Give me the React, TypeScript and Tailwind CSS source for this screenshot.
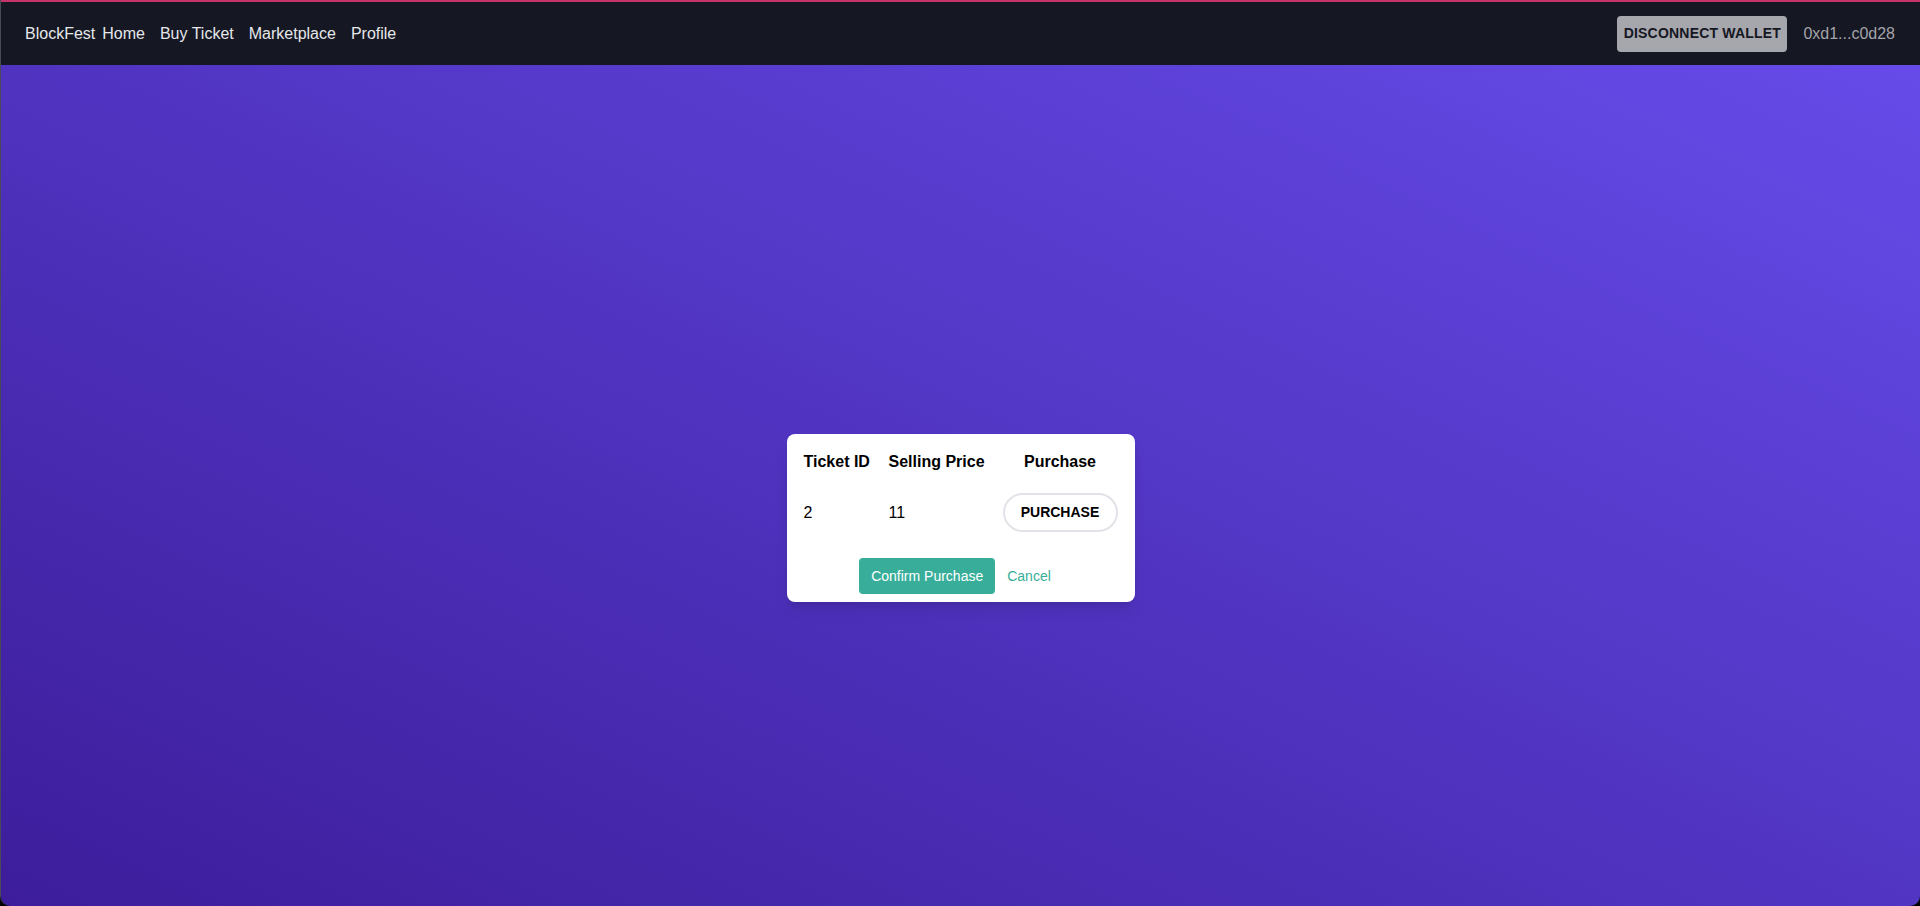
import React from 'react';

const font = { fontFamily: '"Liberation Sans", Arial, Helvetica, sans-serif' };

const links = ['Home', 'Buy Ticket', 'Marketplace', 'Profile'];

const Navbar: React.FC = () => (
  <nav className="flex h-[65px] items-center justify-between border-t-[2px] border-[#c4336a] bg-[#151722] pl-[24px] pr-[25px]">
    <div className="flex items-center text-[16px] text-[#e5e7eb]">
      <span className="mr-[7px]">BlockFest</span>
      <div className="flex gap-[15px]">
        {links.map((l) => (
          <a key={l} className="cursor-pointer">
            {l}
          </a>
        ))}
      </div>
    </div>
    <div className="flex items-center">
      <button className="h-[36px] w-[170px] rounded-[4px] bg-[#a6a6ad] text-[14px] font-bold tracking-[0.2px] text-[#151722]">
        DISCONNECT WALLET
      </button>
      <span className="ml-[16px] text-[16px] text-[#a3a3ab]">0xd1...c0d28</span>
    </div>
  </nav>
);

const PurchaseModal: React.FC = () => (
  <div className="w-[348px] rounded-[8px] bg-white pb-[8px] pl-[17px] pr-[16px] pt-[18px] text-black shadow-lg">
    <div className="flex h-[20px] items-center text-[16px] font-bold">
      <div className="w-[85px]">Ticket ID</div>
      <div className="w-[114px]">Selling Price</div>
      <div className="w-[115px] text-center">Purchase</div>
    </div>
    <div className="mt-[21px] flex items-center text-[16px]">
      <div className="w-[85px]">2</div>
      <div className="w-[114px]">11</div>
      <button className="h-[39px] w-[115px] rounded-full border-[2px] border-[#e2e2e8] text-[14px] font-bold">
        PURCHASE
      </button>
    </div>
    <div className="mt-[26px] flex items-center justify-center pr-[12px]">
      <button className="h-[36px] w-[136px] rounded-[4px] bg-[#38ae9a] text-[14px] text-white">
        Confirm Purchase
      </button>
      <button className="ml-[12px] text-[14px] text-[#38ae9a]">Cancel</button>
    </div>
  </div>
);

export default function App() {
  return (
    <div style={font} className="relative h-[906px] overflow-hidden bg-black">
      <div className="h-full overflow-hidden rounded-b-[10px] border-l border-[#4a4a55]">
        <Navbar />
        <main className="flex min-h-screen items-center justify-center bg-gradient-to-tr from-[#3b1b98] to-[#664be9]">
          <PurchaseModal />
        </main>
      </div>
    </div>
  );
}
